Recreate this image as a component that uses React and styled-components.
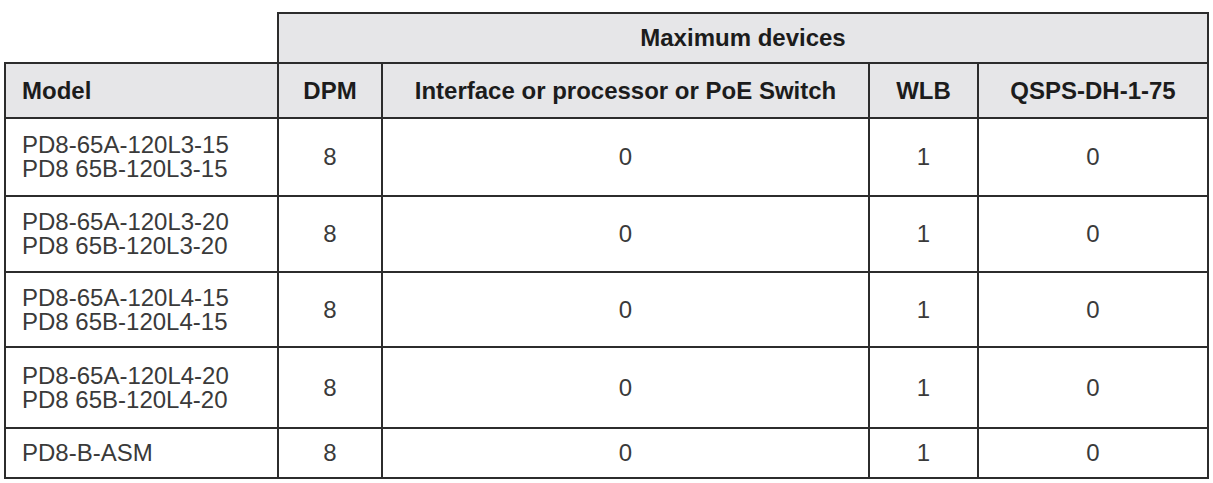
import React from 'react';
import styled, { createGlobalStyle } from 'styled-components';

const Global = createGlobalStyle`
  html, body {
    margin: 0;
    background: #fff;
  }
  body {
    padding: 12px 0 0 4px;
    font-family: "Liberation Sans", Arial, Helvetica, sans-serif;
  }
`;

const LINE = '#2c2c2c';

const Grid = styled.div`
  display: grid;
  grid-template-columns: 275px 104px 487px 109px 230px;
  grid-template-rows: 52px 55px 78px 76px 75px 81px 50px;
  width: 1205px;
`;

const Cell = styled.div`
  display: flex;
  align-items: center;
  justify-content: ${(p) => (p.$left ? 'flex-start' : 'center')};
  padding-left: ${(p) => (p.$left ? '16px' : '0')};
  border-right: 2px solid ${LINE};
  border-bottom: 2px solid ${LINE};
  border-left: ${(p) => (p.$first ? `2px solid ${LINE}` : 'none')};
  border-top: ${(p) => (p.$top ? `2px solid ${LINE}` : 'none')};
  grid-column: ${(p) => p.$span || 'auto'};
  background: ${(p) => (p.$head ? '#e6e6e8' : '#fff')};
  color: ${(p) => (p.$head ? '#1c1c1c' : '#3a3a3a')};
  font-size: 24px;
  font-weight: ${(p) => (p.$head ? 700 : 400)};
  line-height: 24px;
  box-sizing: border-box;
`;

const Corner = styled.div`
  border-right: 2px solid ${LINE};
  border-bottom: 2px solid ${LINE};
  box-sizing: border-box;
`;

const ModelName = styled.div`
  display: flex;
  flex-direction: column;
`;

const columns = ['DPM', 'Interface or processor or PoE Switch', 'WLB', 'QSPS-DH-1-75'];

const rows = [
  { model: ['PD8-65A-120L3-15', 'PD8 65B-120L3-15'], values: [8, 0, 1, 0] },
  { model: ['PD8-65A-120L3-20', 'PD8 65B-120L3-20'], values: [8, 0, 1, 0] },
  { model: ['PD8-65A-120L4-15', 'PD8 65B-120L4-15'], values: [8, 0, 1, 0] },
  { model: ['PD8-65A-120L4-20', 'PD8 65B-120L4-20'], values: [8, 0, 1, 0] },
  { model: ['PD8-B-ASM'], values: [8, 0, 1, 0] },
];

const App = () => (
  <>
    <Global />
    <Grid>
      <Corner />
      <Cell $head $top $span="span 4">Maximum devices</Cell>

      <Cell $head $first $left>Model</Cell>
      {columns.map((c) => (
        <Cell key={c} $head>{c}</Cell>
      ))}

      {rows.map((r) => (
        <React.Fragment key={r.model[0]}>
          <Cell $first $left>
            <ModelName>
              {r.model.map((m) => (
                <span key={m}>{m}</span>
              ))}
            </ModelName>
          </Cell>
          {r.values.map((v, i) => (
            <Cell key={i}>{v}</Cell>
          ))}
        </React.Fragment>
      ))}
    </Grid>
  </>
);

export default App;
